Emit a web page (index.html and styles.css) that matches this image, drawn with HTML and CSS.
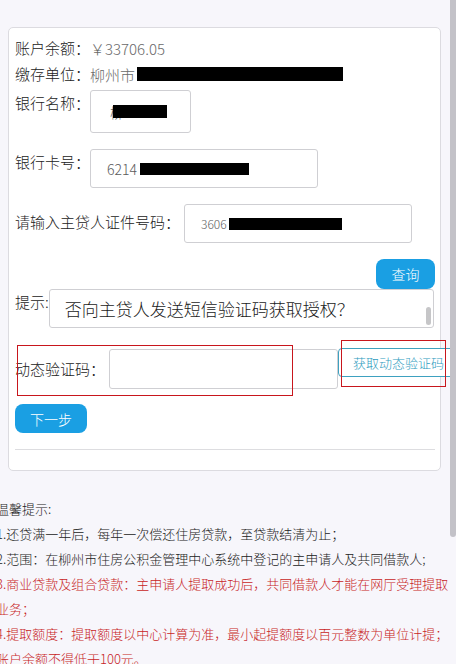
FILE: index.html
```html
<!DOCTYPE html>
<html lang="zh-CN">
<head>
<meta charset="utf-8">
<title>提取</title>
<link rel="stylesheet" href="styles.css">
</head>
<body>
<div class="page">
  <div class="card">
    <div class="line"><span class="lbl">账户余额：</span><span class="val">￥33706.05</span></div>
    <div class="line"><span class="lbl">缴存单位：</span><span class="val">柳州市</span><span class="redact r-company"></span></div>

    <div class="field f-bank">
      <span class="lbl">银行名称：</span>
      <div class="input in-bank"><span class="itext">柳</span><span class="redact r-bank"></span></div>
    </div>

    <div class="field f-gap">
      <span class="lbl">银行卡号：</span>
      <div class="input in-card"><span class="itext">6214</span><span class="redact r-card"></span></div>
    </div>

    <div class="field f-gap">
      <span class="lbl lbl-id">请输入主贷人证件号码：</span>
      <div class="input in-id"><span class="itext small">3606</span><span class="redact r-id"></span></div>
    </div>

    <div class="query-row"><button class="btn btn-query">查询</button></div>

    <div class="field">
      <span class="lbl lbl-tip">提示:</span>
      <div class="tipbox">否向主贷人发送短信验证码获取授权？<span class="tip-thumb"></span></div>
    </div>

    <div class="field verify">
      <span class="lbl lbl-code">动态验证码：</span>
      <div class="input in-code"></div>
      <button class="btn-code">获取动态验证码</button>
      <span class="mark mark-a"></span>
      <span class="mark mark-b"></span>
    </div>

    <button class="btn btn-next">下一步</button>
    <div class="rule"></div>
  </div>

  <div class="tips">
    <p>温馨提示:</p>
    <p>1.还贷满一年后，每年一次偿还住房贷款，至贷款结清为止；</p>
    <p>2.范围：在柳州市住房公积金管理中心系统中登记的主申请人及共同借款人;</p>
    <p class="red">3.商业贷款及组合贷款：主申请人提取成功后，共同借款人才能在网厅受理提取业务；</p>
    <p class="red">4.提取额度：提取额度以中心计算为准，最小起提额度以百元整数为单位计提；账户余额不得低于100元。</p>
  </div>
</div>
<div class="vscroll"></div>
</body>
</html>
```

FILE: styles.css
```css
html, body {
  margin: 0;
  padding: 0;
}
body {
  background: #f7f6fb;
  font-family: "Noto Sans CJK SC", "Noto Sans", sans-serif;
  font-weight: 300;
  color: #222;
}
.page {
  overflow: hidden;
  padding: 27px 15px 0 8px;
}
.card {
  background: #fff;
  border: 1px solid #dcdbe0;
  border-radius: 5px;
  padding: 7px 5px 20px 6px;
}
.line {
  display: flex;
  align-items: center;
  height: 26px;
  font-size: 15px;
  white-space: nowrap;
}
.lbl {
  font-size: 15px;
  line-height: 26px;
  color: #222;
  white-space: nowrap;
  flex: none;
}
.val {
  color: #6a6a6a;
  font-size: 15px;
}
.redact {
  display: inline-block;
  background: #000;
  flex: none;
}
.r-company { width: 206px; height: 14px; margin-left: 2px; }
.r-bank { width: 54px; height: 13px; margin-left: -11px; }
.r-card { width: 109px; height: 12px; margin-left: 3px; }
.r-id { width: 113px; height: 12px; margin-left: 2px; }

.field {
  display: flex;
  align-items: flex-start;
}
.f-bank { margin-top: 3px; }
.f-gap { margin-top: 16px; }
.lbl-id { margin-top: 5px; }
.input {
  box-sizing: border-box;
  border: 1px solid #cfcfd3;
  border-radius: 3px;
  background: #fff;
  display: flex;
  align-items: center;
  flex: none;
}
.itext {
  color: #5a5a5a;
  font-size: 14px;
}
.itext.small { font-size: 12px; }
.in-bank { width: 101px; height: 43px; padding-left: 19px; }
.in-card { width: 228px; height: 39px; padding-left: 16px; }
.in-id { width: 228px; height: 39px; padding-left: 16px; margin-left: 4px; }

.btn {
  border: none;
  background: #1a9fe3;
  color: #fff;
  font-family: inherit;
  font-weight: 300;
  font-size: 14px;
  border-radius: 8px;
  padding: 0;
  display: block;
}
.query-row {
  display: flex;
  justify-content: flex-end;
  margin-top: 16px;
}
.btn-query { width: 59px; height: 30px; }

.lbl-tip { margin-top: 0; }
.tipbox {
  position: relative;
  box-sizing: border-box;
  width: 385px;
  height: 39px;
  border: 1px solid #cfcfd3;
  border-radius: 3px;
  padding-left: 15px;
  font-size: 17px;
  line-height: 38px;
  color: #1a1a1a;
  white-space: nowrap;
  flex: none;
}
.tip-thumb {
  position: absolute;
  right: 2px;
  top: 17px;
  width: 5px;
  height: 18px;
  background: #c6c6c8;
  border-radius: 3px;
}

.verify {
  position: relative;
  margin-top: 21px;
}
.lbl-code { line-height: 40px; }
.in-code { width: 229px; height: 40px; margin-left: 4px; }
.btn-code {
  flex: none;
  box-sizing: border-box;
  height: 29px;
  margin-top: -1px;
  padding: 0 14px;
  border: 1px solid #3ea1c0;
  border-radius: 4px;
  background: #fff;
  color: #2f9cc0;
  font-family: inherit;
  font-weight: 300;
  font-size: 13px;
  white-space: nowrap;
}
.mark {
  position: absolute;
  border: 1px solid #c8161d;
  box-sizing: border-box;
}
.mark-a { left: 2px; top: -4px; width: 276px; height: 51px; }
.mark-b { left: 326px; top: -9px; width: 105px; height: 47px; }

.btn-next {
  width: 72px;
  height: 29px;
  margin-top: 15px;
}
.rule {
  margin-top: 16px;
  border-top: 1px solid #dddde0;
}

.tips {
  margin: 25px -10px 0 -12px;
  font-size: 13px;
  line-height: 25px;
  color: #222;
}
.tips p { margin: 0; }
.tips .red { color: #c81e26; }

.vscroll {
  position: fixed;
  top: 0;
  right: 0;
  width: 6px;
  height: 537px;
  background: #c3c2c8;
  border-radius: 0 0 3px 3px;
}
```
